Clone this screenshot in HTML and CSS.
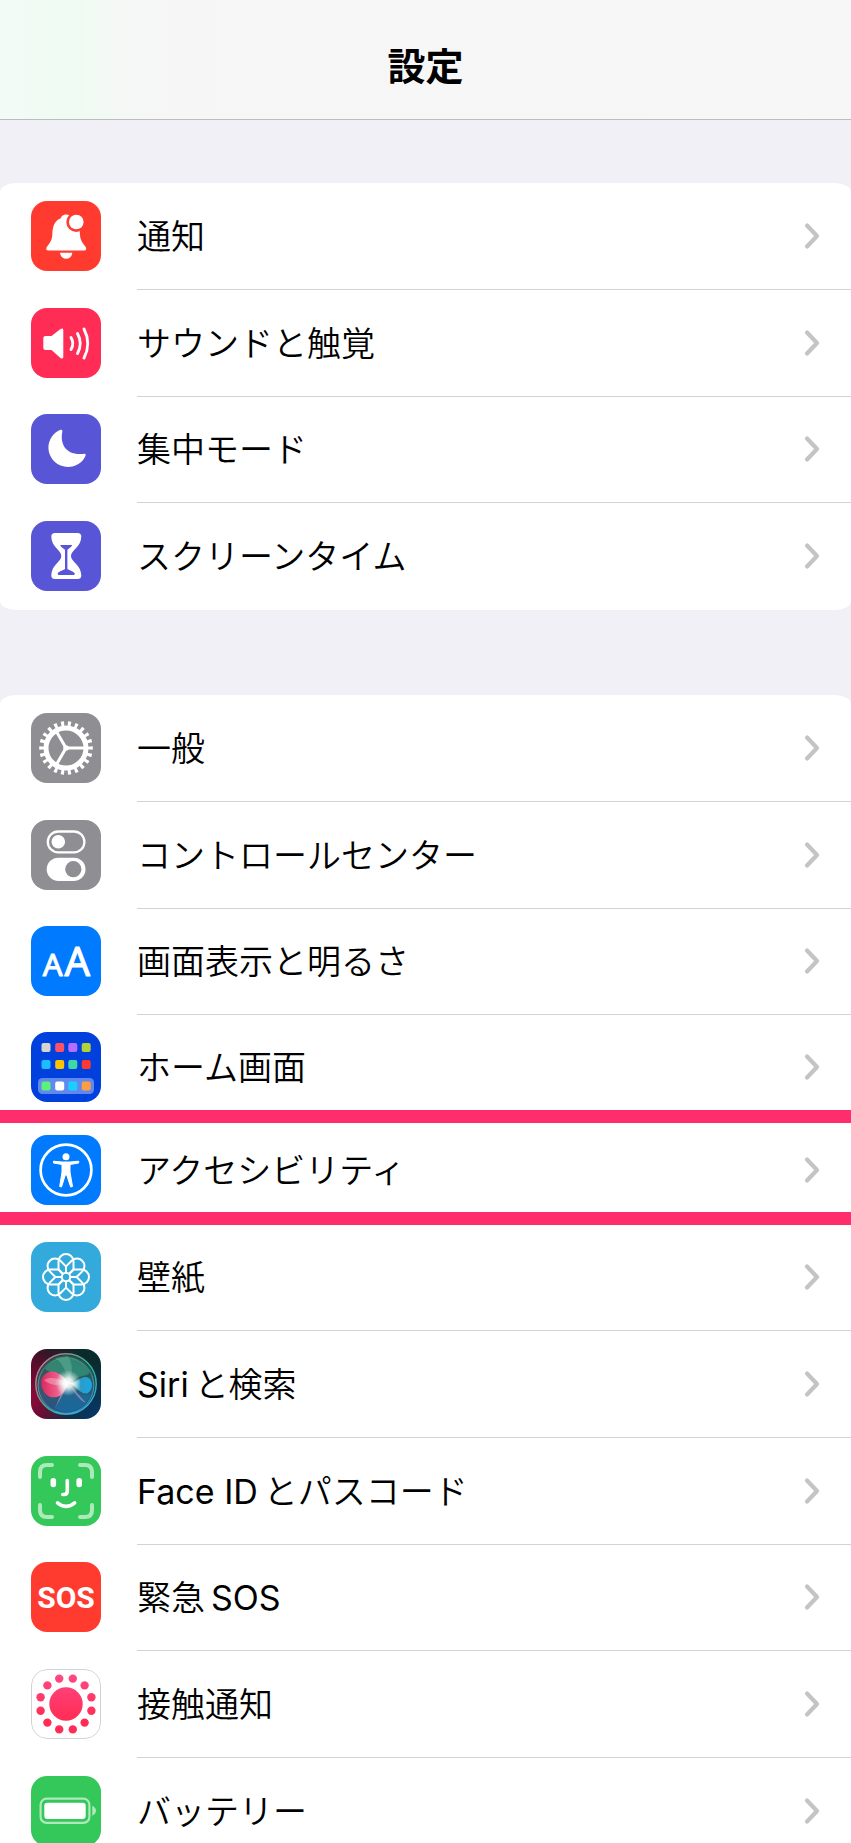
FILE: index.html
```html
<!DOCTYPE html>
<html lang="ja">
<head>
<meta charset="utf-8">
<meta name="viewport" content="width=device-width, initial-scale=1">
<title>設定</title>
<link rel="stylesheet" href="styles.css">
</head>
<body>
<svg class="defs" aria-hidden="true">
  <symbol id="chevron" viewBox="0 0 16 28"><path d="M3 3.500 13 14 3 24.500" fill="none" stroke="currentColor" stroke-width="4.200" stroke-linecap="round" stroke-linejoin="round"/></symbol>
</svg>
<div class="screen">
  <header class="header"><h1 class="title">設定</h1></header>
  <main class="content">
    <ul class="group">
      <li class="row"><a class="link" href="#notifications">
        <svg class="icon red" viewBox="0 0 70 70" aria-hidden="true">
          <path fill="#fff" d="M17 49.500C15 49.500 14.800 47.500 16 45.800C18.500 42 21 40 21.300 34C21.500 26 23 20 29.500 17.500C30.500 15 32.500 13.500 35 13.500C38 13.500 40 15 41 17.500C47.500 20 48.800 26 49 34C49.300 40 52 42 54.500 45.800C55.700 47.500 55.300 49.500 53.500 49.500ZM29 51.700H41.300C41 55.500 38.500 57.700 35.200 57.700S29.300 55.500 29 51.700Z"/>
          <circle cx="45.300" cy="21" r="10" fill="#ff3b30"/><circle cx="45.300" cy="21" r="7.300" fill="#fff"/>
        </svg>
        <span class="label">通知</span><svg class="chevron"><use href="#chevron"/></svg></a></li>
      <li class="row"><a class="link" href="#sounds">
        <svg class="icon pink" viewBox="0 0 70 70" aria-hidden="true">
          <path fill="#fff" d="M14.500 28H20.500L29.500 21C31 20 32.300 20.500 32.300 22.300V48.700C32.300 50.500 31 51 29.500 50L20.500 42H14.500Q12.300 42 12.300 40V30Q12.300 28 14.500 28Z"/>
          <path fill="none" stroke="#fff" stroke-width="2.900" stroke-linecap="round" d="M40 29.500Q43.600 35.500 40 41.500M46.500 25.500Q52 35.500 46.500 45.500M53 21Q60.500 35.500 53 50"/>
        </svg>
        <span class="label">サウンドと触覚</span><svg class="chevron"><use href="#chevron"/></svg></a></li>
      <li class="row"><a class="link" href="#focus">
        <svg class="icon indigo" viewBox="0 0 70 70" aria-hidden="true">
          <path fill="#fff" d="M29.500 15.800C31 15.200 31.700 16.200 31.300 18C29 29 34 41.500 52 40C54.300 39.500 55.300 40.200 54.300 42.300C51.500 48.800 44.500 53 37 53A19.500 19.500 0 0 1 17.400 34C17.400 25.500 22.500 18.500 29.500 15.800Z"/>
        </svg>
        <span class="label">集中モード</span><svg class="chevron"><use href="#chevron"/></svg></a></li>
      <li class="row"><a class="link" href="#screentime">
        <svg class="icon indigo" viewBox="0 0 70 70" aria-hidden="true">
          <path fill="#fff" d="M24 12H46.500Q50.300 12 50.300 15.500C50.300 26 40 29 40 35S50.300 44 50.300 54.500Q50.300 58 46.500 58H24Q20.300 58 20.300 54.500C20.300 44 30.300 41 30.300 35S20.300 26 20.300 15.500Q20.300 12 24 12Z"/>
          <path fill="#5856d6" d="M29.500 24H41Q41.500 25 36.400 28.800V48C38.500 49.500 43 50.500 43.800 52.500Q44 54 42.500 54H28Q26.500 54 26.700 52.500C27.500 50.500 32 49.500 34 48V28.800Q28.500 25 29.500 24Z"/>
        </svg>
        <span class="label">スクリーンタイム</span><svg class="chevron"><use href="#chevron"/></svg></a></li>
    </ul>

    <ul class="group">
      <li class="row"><a class="link" href="#general">
        <svg class="icon gray" viewBox="0 0 70 70" aria-hidden="true">
          <g fill="none" stroke="#fff">
            <circle cx="35" cy="35" r="24" stroke-width="5.600" pathLength="44" stroke-dasharray=".9 1.100" stroke-dashoffset=".450"/>
            <circle cx="35" cy="35" r="20" stroke-width="5"/>
            <path stroke-width="3" d="M35 35H53M35 35 26 19.400M35 35 26 50.600"/>
          </g>
          <circle cx="35" cy="35" r="2.800" fill="#fff"/>
        </svg>
        <span class="label">一般</span><svg class="chevron"><use href="#chevron"/></svg></a></li>
      <li class="row"><a class="link" href="#control">
        <svg class="icon gray" viewBox="0 0 70 70" aria-hidden="true">
          <rect x="16.800" y="11.500" width="36.600" height="20.800" rx="10.400" fill="none" stroke="#fff" stroke-width="2.300"/>
          <circle cx="27.300" cy="21.800" r="6.800" fill="#fff"/>
          <rect x="15.700" y="37.700" width="38.800" height="23.200" rx="11.600" fill="#fff"/>
          <circle cx="42.300" cy="49.200" r="8.100" fill="#8e8e93"/>
        </svg>
        <span class="label">コントロールセンター</span><svg class="chevron"><use href="#chevron"/></svg></a></li>
      <li class="row"><a class="link" href="#display">
        <svg class="icon blue" viewBox="0 0 70 70" aria-hidden="true">
          <g class="letters"><text x="21.600" y="49.500" font-size="31">A</text><text x="46.400" y="49.500" font-size="40">A</text></g>
        </svg>
        <span class="label">画面表示と明るさ</span><svg class="chevron"><use href="#chevron"/></svg></a></li>
      <li class="row before-marked"><a class="link" href="#home">
        <svg class="icon home" viewBox="0 0 70 70" aria-hidden="true">
          <rect x="7" y="46" width="56" height="16" rx="4.500" fill="#6188ed"/>
          <rect x="10.500" y="11" width="9" height="9" rx="2" fill="#d5d5ce"/><rect x="24.200" y="11" width="9" height="9" rx="2" fill="#ff5166"/><rect x="37.300" y="11" width="9" height="9" rx="2" fill="#b76dff"/><rect x="50.700" y="11" width="9" height="9" rx="2" fill="#b2d235"/>
          <rect x="10.500" y="28" width="9" height="9" rx="2" fill="#1bbdff"/><rect x="24.200" y="28" width="9" height="9" rx="2" fill="#ffc300"/><rect x="37.300" y="28" width="9" height="9" rx="2" fill="#3fd8a4"/><rect x="50.700" y="28" width="9" height="9" rx="2" fill="#ff3830"/>
          <rect x="10.500" y="49.600" width="9" height="9" rx="2" fill="#5af277"/><rect x="24.200" y="49.600" width="9" height="9" rx="2" fill="#fff"/><rect x="37.300" y="49.600" width="9" height="9" rx="2" fill="#1acfff"/><rect x="50.700" y="49.600" width="9" height="9" rx="2" fill="#ff9d42"/>
        </svg>
        <span class="label">ホーム画面</span><svg class="chevron"><use href="#chevron"/></svg></a></li>
      <li class="row marked"><a class="link" href="#accessibility">
        <svg class="icon blue" viewBox="0 0 70 70" aria-hidden="true">
          <circle cx="35" cy="35" r="25.400" fill="none" stroke="#fff" stroke-width="2.700"/>
          <circle cx="35" cy="21.700" r="3.500" fill="#fff"/>
          <path fill="#fff" stroke="#fff" stroke-width="1" stroke-linejoin="round" d="M22.500 26.200 31 27H39L47.700 26.200V28L39 29.500V37L41.500 51.500 39.700 52 35.700 40H34.300L30.500 52 28.700 51.500 31 37V29.500L22.500 28Z"/>
        </svg>
        <span class="label">アクセシビリティ</span><svg class="chevron"><use href="#chevron"/></svg></a></li>
      <li class="row"><a class="link" href="#wallpaper">
        <svg class="icon cyan" viewBox="0 0 70 70" aria-hidden="true">
          <defs><path id="petal" d="M32.200 32.200 27.500 27.500V19.500A7.500 7.500 0 0 1 42.500 19.500V27.500L37.800 32.200"/></defs>
          <g fill="none" stroke="#fff" stroke-width="2" stroke-linejoin="round">
            <use href="#petal"/><use href="#petal" transform="rotate(45 35 35)"/><use href="#petal" transform="rotate(90 35 35)"/><use href="#petal" transform="rotate(135 35 35)"/><use href="#petal" transform="rotate(180 35 35)"/><use href="#petal" transform="rotate(225 35 35)"/><use href="#petal" transform="rotate(270 35 35)"/><use href="#petal" transform="rotate(315 35 35)"/>
            <circle cx="35" cy="35" r="4.200"/>
          </g>
        </svg>
        <span class="label">壁紙</span><svg class="chevron"><use href="#chevron"/></svg></a></li>
      <li class="row"><a class="link" href="#siri">
        <svg class="icon siri" viewBox="0 0 70 70" aria-hidden="true">
          <defs>
            <linearGradient id="ring" x1="0" y1="0" x2="1" y2="1"><stop offset="0" stop-color="#c8788c"/><stop offset=".3" stop-color="#8a9090"/><stop offset=".55" stop-color="#2cb48f"/><stop offset="1" stop-color="#3aa4ec"/></linearGradient>
            <linearGradient id="ring2" x1="0" y1="0" x2="0" y2="1"><stop offset="0" stop-color="#5b9989"/><stop offset="1" stop-color="#5ab4f2"/></linearGradient>
            <linearGradient id="orb" x1="0" y1="0" x2="0" y2="1"><stop offset="0" stop-color="#1f6a58"/><stop offset=".5" stop-color="#33686d"/><stop offset="1" stop-color="#17649c"/></linearGradient>
            <linearGradient id="red" x1="0" x2="1"><stop offset="0" stop-color="#dc2860"/><stop offset=".6" stop-color="#ee5f8a"/><stop offset="1" stop-color="#fff" stop-opacity=".9"/></linearGradient>
            <linearGradient id="azure" x1="0" x2="1"><stop offset="0" stop-color="#d3fbff"/><stop offset=".5" stop-color="#2f9bc8"/><stop offset="1" stop-color="#16a8e4"/></linearGradient>
            <radialGradient id="flare"><stop offset="0" stop-color="#fff"/><stop offset=".35" stop-color="#fff" stop-opacity=".85"/><stop offset="1" stop-color="#c9f6ee" stop-opacity="0"/></radialGradient>
          </defs>
          <circle cx="35" cy="35" r="29" fill="url(#orb)" opacity=".8"/>
          <path d="M14 20C24 4 48 4 58 22C60 28 50 24 37 34C29 26 19 24 14 20Z" fill="#3fae8d" opacity=".5"/>
          <path d="M37 36C27 44 30 54 23 59C36 68 54 61 60 45C52 48 44 43 37 36Z" fill="#1d6fa8" opacity=".6"/>
          <path d="M24 9C32 14 36 24 38 34 42 24 42 15 37 7Z" fill="#9fe0cd" opacity=".25"/>
          <path d="M38 34C33 28 27 22 20 22.500C11 24 8 33 12 41C16 50 26 50 31 45C34 42 35 37 38 34Z" fill="url(#red)"/>
          <path d="M13 31C20 26 30 31 38 34C29 37 19 37 13 31Z" fill="#fff" opacity=".3"/>
          <path d="M38 34C45 35 48 28 55 28C62 29 63 40 57 44C50 47 46 37 38 34Z" fill="url(#azure)"/>
          <path d="M38 35 24 59C28 51 29 43 38 35ZM39 36 55 54C48 51 43 43 39 36Z" fill="#d89ac1" opacity=".55"/>
          <circle cx="37" cy="34" r="13" fill="url(#flare)"/>
          <circle cx="35" cy="35" r="30.200" fill="none" stroke="url(#ring)" stroke-width="1.500"/>
          <circle cx="35" cy="36.500" r="27.800" fill="none" stroke="url(#ring2)" stroke-width=".9" opacity=".8"/>
        </svg>
        <span class="label"><span class="latin leading">Siri</span>と検索</span><svg class="chevron"><use href="#chevron"/></svg></a></li>
      <li class="row"><a class="link" href="#faceid">
        <svg class="icon green" viewBox="0 0 70 70" aria-hidden="true">
          <g fill="none" stroke="#fff" stroke-linecap="round">
            <path stroke="#aee9bc" stroke-width="4" d="M9 21V16Q9 9 16 9H21M49 9H54Q61 9 61 16V21M61 49V54Q61 61 54 61H49M21 61H16Q9 61 9 54V49"/>
            <path stroke-width="5.600" d="M22.300 24.800V28.500M48.200 24.800V28.500"/>
            <path stroke-width="3.600" d="M36.300 24.500V35Q36.300 38.500 33 38.500H31.800"/>
            <path stroke-width="3.600" d="M26.500 46.800Q35 54 43.700 46.800"/>
          </g>
        </svg>
        <span class="label"><span class="latin leading">Face ID</span>とパスコード</span><svg class="chevron"><use href="#chevron"/></svg></a></li>
      <li class="row"><a class="link" href="#sos">
        <svg class="icon red" viewBox="0 0 70 70" aria-hidden="true"><text class="sos" x="35" y="46">SOS</text></svg>
        <span class="label">緊急<span class="latin trailing">SOS</span></span><svg class="chevron"><use href="#chevron"/></svg></a></li>
      <li class="row"><a class="link" href="#exposure">
        <svg class="icon white" viewBox="0 0 70 70" aria-hidden="true">
          <defs><linearGradient id="rose" gradientUnits="userSpaceOnUse" x1="0" y1="6" x2="0" y2="50"><stop offset="0" stop-color="#ff4883"/><stop offset="1" stop-color="#ff2d55"/></linearGradient></defs>
          <rect x=".5" y=".5" width="69" height="69" rx="15.500" fill="#fff" stroke="#d2d2d4"/>
          <g fill="url(#rose)"><circle cx="35" cy="35" r="16.700"/>
            <circle cx="28.200" cy="9.600" r="4.200"/><circle cx="41.800" cy="9.600" r="4.200"/><circle cx="53.600" cy="16.400" r="4.200"/><circle cx="60.400" cy="28.200" r="4.200"/><circle cx="60.400" cy="41.800" r="4.200"/><circle cx="53.600" cy="53.600" r="4.200"/><circle cx="41.800" cy="60.400" r="4.200"/><circle cx="28.200" cy="60.400" r="4.200"/><circle cx="16.400" cy="53.600" r="4.200"/><circle cx="9.600" cy="41.800" r="4.200"/><circle cx="9.600" cy="28.200" r="4.200"/><circle cx="16.400" cy="16.400" r="4.200"/></g>
        </svg>
        <span class="label">接触通知</span><svg class="chevron"><use href="#chevron"/></svg></a></li>
      <li class="row"><a class="link" href="#battery">
        <svg class="icon green" viewBox="0 0 70 70" aria-hidden="true">
          <rect x="9.600" y="22.700" width="48.800" height="24.200" rx="6" fill="none" stroke="#aee9bc" stroke-width="2.200"/>
          <rect x="13.300" y="26.700" width="41.400" height="16.200" rx="3" fill="#fff"/>
          <path fill="#aee9bc" d="M61.300 29.700Q65 31.500 65 34.700T61.300 39.700Z"/>
        </svg>
        <span class="label">バッテリー</span><svg class="chevron"><use href="#chevron"/></svg></a></li>
    </ul>
  </main>
</div>
</body>
</html>
```
FILE: styles.css
```css
* {
  box-sizing: border-box;
}

body {
  margin: 0;
  background: #f1f0f6;
  color: #000;
  font-family: Inter, "Noto Sans CJK JP", sans-serif;
}

.defs {
  display: none;
}

.screen {
  height: 100vh;
  overflow-y: auto;
  scrollbar-width: none;
}

.header {
  display: flex;
  align-items: center;
  justify-content: center;
  height: 120px;
  padding-top: 13px;
  border-bottom: 1px solid #bcbcbe;
  background: linear-gradient(90deg, #f3fbf7 0, #effbf2 8%, #f4f8f5 14%, #f6f6f6 20%, #f7f7f7 100%);
}

.title {
  margin: 0;
  font-size: 38px;
  line-height: 48px;
  font-weight: 700;
}

.content {
  display: flex;
  flex-direction: column;
  gap: 85px;
  padding-top: 63px;
}

.group {
  margin: 0;
  padding: 0;
  list-style: none;
  background: #fff;
  border-radius: 16px / 9px;
}

.row {
  position: relative;
  display: flex;
  height: 107px;
  padding-bottom: 2px;
}

.row:nth-child(3n) {
  height: 106px;
}

.row:not(:last-child)::after {
  content: "";
  position: absolute;
  right: 0;
  bottom: 0;
  left: 137px;
  height: 1px;
  background: #d3d3d5;
}

.row.before-marked {
  height: 95px;
  padding-bottom: 8px;
  align-items: flex-end;
}

.row.marked {
  height: 115px;
  padding: 4px 0 0;
  border: solid #ff2d6c;
  border-width: 13px 0;
}

.row.before-marked::after,
.row.marked::after {
  display: none;
}

.link {
  display: flex;
  flex: 1;
  align-items: center;
  padding: 0 31px;
  color: inherit;
  text-decoration: none;
}

.icon {
  flex: none;
  width: 70px;
  height: 70px;
  border-radius: 16px;
}

.label {
  flex: 1;
  margin-left: 36px;
  padding-top: 2px;
  font-size: 34px;
  line-height: 48px;
  font-weight: 350;
  white-space: nowrap;
}

.latin {
  font-weight: 400;
}

.leading {
  margin-right: 6px;
}

.trailing {
  margin-left: 6px;
}

.chevron {
  flex: none;
  width: 16px;
  height: 28px;
  color: #c4c4c6;
}

.red { background: #ff3b30; }
.pink { background: #ff2d55; }
.indigo { background: #5856d6; }
.gray { background: #8e8e93; }
.blue { background: #007aff; }
.home { background: #0040dd; }
.cyan { background: #34aadc; }
.green { background: #34c759; }
.white { background: #fff; }

.siri {
  background:
    radial-gradient(circle at 100% 100%, #08386b, transparent 60%),
    radial-gradient(circle at 0 70%, #8b0a3c, transparent 55%),
    linear-gradient(90deg, #4b0c25, #0a2b2c 65%);
}

.letters {
  fill: #fff;
  stroke: #fff;
  stroke-width: 1;
  stroke-linejoin: round;
  font-family: "Noto Sans", sans-serif;
  text-anchor: middle;
}

.sos {
  fill: #fff;
  font-family: Roboto, sans-serif;
  font-size: 30px;
  font-weight: 700;
  text-anchor: middle;
}
```
